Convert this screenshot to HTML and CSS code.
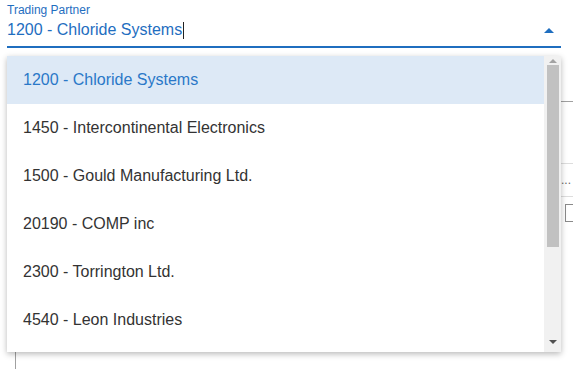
FILE: index.html
```html
<!DOCTYPE html>
<html>
<head>
    <title>Trading Partner</title>
    <link rel="stylesheet" href="styles.css">
</head>
<body>
    <div class="field">
        <label class="field-label">Trading Partner</label>
        <div class="field-input">
            <span class="field-value">1200 - Chloride Systems</span><span class="caret"></span>
            <span class="arrow"></span>
        </div>
    </div>

    <div class="backdrop">
        <div class="backdrop-head">
            <span class="head-text">Memo...</span>
        </div>
        <div class="backdrop-box"></div>
    </div>

    <div class="menu">
        <ul class="menu-list">
            <li class="menu-item selected">1200 - Chloride Systems</li>
            <li class="menu-item">1450 - Intercontinental Electronics</li>
            <li class="menu-item">1500 - Gould Manufacturing Ltd.</li>
            <li class="menu-item">20190 - COMP inc</li>
            <li class="menu-item">2300 - Torrington Ltd.</li>
            <li class="menu-item">4540 - Leon Industries</li>
        </ul>
        <div class="scrollbar">
            <span class="scroll-up"></span>
            <div class="scroll-thumb"></div>
            <span class="scroll-down"></span>
        </div>
    </div>
</body>
</html>
```

FILE: styles.css
```css
* {
    padding: 0;
    margin: 0;
    box-sizing: border-box;
}
body {
    width: 573px;
    height: 369px;
    overflow: hidden;
    font-family: "Liberation Sans", Arial, sans-serif;
    background-color: #ffffff;
    position: relative;
}
.field {
    width: 554px;
    margin-left: 7px;
}
.field-label {
    display: block;
    margin-top: 3px;
    font-size: 12px;
    line-height: 14px;
    color: #1f6ebf;
}
.field-input {
    display: flex;
    align-items: center;
    margin-top: 3px;
    padding-bottom: 6px;
    border-bottom: 2px solid #1f6ebf;
    font-size: 16px;
    line-height: 20px;
    color: #1f6ebf;
}
.caret {
    display: inline-block;
    width: 1px;
    height: 17px;
    background-color: #222;
    margin-left: 1px;
}
.arrow {
    margin-left: auto;
    margin-right: 7px;
    width: 0;
    height: 0;
    border-left: 5px solid transparent;
    border-right: 5px solid transparent;
    border-bottom: 5px solid #1f6ebf;
}

/* page content that sits under the open menu */
.backdrop {
    margin-left: 15px;
    margin-top: 53px;
    height: 268px;
    border-top: 1px solid #a0a0a0;
    border-left: 1px solid #a0a0a0;
}
.backdrop-head {
    display: flex;
    justify-content: flex-end;
    align-items: center;
    margin-top: 61px;
    height: 34px;
    padding-right: 2px;
    border-top: 1px solid #dddddd;
    border-bottom: 1px solid #dddddd;
    font-size: 12px;
    color: #666;
}
.backdrop-box {
    margin-top: 7px;
    margin-left: 549px;
    height: 18px;
    border: 1px solid #8a8a8a;
    border-right: none;
}

/* dropdown menu */
.menu {
    position: absolute;
    top: 56px;
    left: 7px;
    width: 554px;
    height: 296px;
    display: flex;
    background-color: #ffffff;
    box-shadow: 0 2px 6px rgba(0, 0, 0, 0.28);
    overflow: hidden;
}
.menu-list {
    list-style: none;
    flex: 1;
}
.menu-item {
    height: 48px;
    padding-left: 16px;
    display: flex;
    align-items: center;
    font-size: 16px;
    color: #333333;
}
.menu-item.selected {
    background-color: #dde9f6;
    color: #2a78c8;
}
.scrollbar {
    width: 17px;
    background-color: #f1f1f1;
    display: flex;
    flex-direction: column;
    align-items: center;
}
.scroll-up,
.scroll-down {
    width: 0;
    height: 0;
    border-left: 4px solid transparent;
    border-right: 4px solid transparent;
}
.scroll-up {
    margin-top: 3px;
    border-bottom: 4px solid #a3a3a3;
}
.scroll-thumb {
    margin-top: 2px;
    width: 12px;
    height: 182px;
    background-color: #c1c1c1;
}
.scroll-down {
    margin-top: auto;
    margin-bottom: 8px;
    border-top: 4px solid #505050;
}
```
